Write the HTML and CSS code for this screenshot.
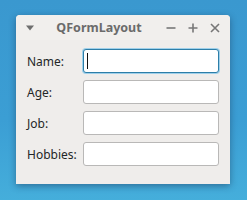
FILE: index.html
```html
<!DOCTYPE html>
<html>
<head>
<meta charset="utf-8">
<link rel="stylesheet" href="styles.css">
</head>
<body>
<div class="window">
  <div class="titlebar">
    <div class="menu-btn">
      <svg width="10" height="6" viewBox="0 0 10 6"><path d="M1 0.5 H9 L5 5.5 Z" fill="#6e6e6e"/></svg>
    </div>
    <div class="title">QFormLayout</div>
    <div class="buttons">
      <div class="btn"><svg width="10" height="10" viewBox="0 0 10 10"><path d="M0.5 5 H9.5" stroke="#777" stroke-width="1.6"/></svg></div>
      <div class="btn"><svg width="10" height="10" viewBox="0 0 10 10"><path d="M0.5 5 H9.5 M5 0.5 V9.5" stroke="#777" stroke-width="1.6"/></svg></div>
      <div class="btn"><svg width="10" height="10" viewBox="0 0 10 10"><path d="M1 1 L9 9 M9 1 L1 9" stroke="#777" stroke-width="1.6"/></svg></div>
    </div>
  </div>
  <div class="form">
    <label class="lbl">Name:</label>
    <div class="field focused"><span class="caret"></span></div>
    <label class="lbl">Age:</label>
    <div class="field"></div>
    <label class="lbl">Job:</label>
    <div class="field"></div>
    <label class="lbl">Hobbies:</label>
    <div class="field"></div>
  </div>
</div>
</body>
</html>
```
FILE: styles.css
```css
html, body {
  margin: 0;
  padding: 0;
}
body {
  width: 247px;
  height: 200px;
  background: linear-gradient(180deg, #3a98cf 0%, #3b9ed4 60%, #45aedb 100%);
  font-family: "Noto Sans", "DejaVu Sans", sans-serif;
  overflow: hidden;
  padding-top: 15px;
  box-sizing: border-box;
}
.window {
  margin-left: 16px;
  width: 214px;
  height: 169px;
  background: #efedeb;
  border-radius: 4px 4px 0 0;
  box-shadow: 0 2px 7px rgba(20, 40, 70, 0.45);
  display: flex;
  flex-direction: column;
}
.titlebar {
  height: 25px;
  display: flex;
  align-items: center;
  background: #f1efed;
  border-radius: 4px 4px 0 0;
}
.menu-btn {
  width: 16px;
  margin-left: 6px;
  display: flex;
  justify-content: center;
  align-items: center;
  height: 100%;
}
.title {
  flex: 1;
  text-align: center;
  font-weight: bold;
  font-size: 12.5px;
  color: #6b6b6b;
}
.buttons {
  display: flex;
  margin-right: 4px;
  height: 100%;
}
.btn {
  width: 22px;
  display: flex;
  justify-content: center;
  align-items: center;
}
.form {
  display: grid;
  grid-template-columns: 56px 1fr;
  grid-auto-rows: 24px;
  row-gap: 7px;
  padding: 9px 11px 0 11px;
}
.lbl {
  display: flex;
  align-items: center;
  font-size: 12px;
  color: #232627;
  white-space: nowrap;
}
.field {
  background: #ffffff;
  border: 1px solid #b9b8b7;
  border-radius: 3px;
  box-sizing: border-box;
  position: relative;
}
.field.focused {
  border-color: #2d7ea8;
  box-shadow: 0 0 0 1px rgba(61, 174, 233, 0.45);
}
.caret {
  position: absolute;
  left: 3px;
  top: 3px;
  width: 1px;
  height: 16px;
  background: #111;
}
```
